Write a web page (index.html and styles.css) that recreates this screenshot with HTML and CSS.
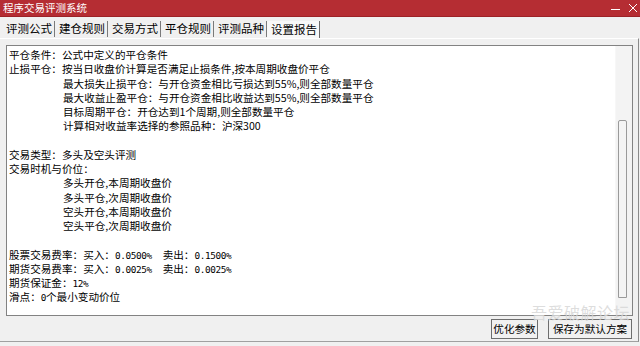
FILE: index.html
```html
<!DOCTYPE html>
<html lang="zh-CN">

<head>
  <meta charset="UTF-8" />
  <title>程序交易评测系统</title>
  <link rel="stylesheet" href="styles.css">
</head>

<body>
  <div class="window">
    <div class="titlebar">
      <span class="title">程序交易评测系统</span>
      <div class="controls">
        <svg width="10" height="10" viewBox="0 0 10 10"><path d="M0 6.5h9" stroke="#fff" stroke-width="1" /></svg>
        <svg width="10" height="10" viewBox="0 0 10 10"><path d="M1 1l8 8M9 1l-8 8" stroke="#fff" stroke-width="1" /></svg>
      </div>
    </div>

    <div class="tabs">
      <div class="tab">评测公式</div>
      <div class="tab">建仓规则</div>
      <div class="tab">交易方式</div>
      <div class="tab">平仓规则</div>
      <div class="tab">评测品种</div>
      <div class="tab active">设置报告</div>
    </div>

    <div class="panel">
      <div class="report">
        <div class="report-text">
          <div class="line">平仓条件：公式中定义的平仓条件</div>
          <div class="line">止损平仓：按当日收盘价计算是否满足止损条件,按本周期收盘价平仓</div>
          <div class="line indent">最大损失止损平仓：与开仓资金相比亏损达到55%,则全部数量平仓</div>
          <div class="line indent">最大收益止盈平仓：与开仓资金相比收益达到55%,则全部数量平仓</div>
          <div class="line indent">目标周期平仓：开仓达到1个周期,则全部数量平仓</div>
          <div class="line indent">计算相对收益率选择的参照品种：沪深300</div>
          <div class="line"></div>
          <div class="line">交易类型：多头及空头评测</div>
          <div class="line">交易时机与价位：</div>
          <div class="line indent">多头开仓,本周期收盘价</div>
          <div class="line indent">多头平仓,次周期收盘价</div>
          <div class="line indent">空头开仓,本周期收盘价</div>
          <div class="line indent">空头平仓,次周期收盘价</div>
          <div class="line"></div>
          <div class="line">股票交易费率：买入：<span class="num">0.0500%</span><span class="gap">卖出：</span><span class="num">0.1500%</span></div>
          <div class="line">期货交易费率：买入：<span class="num">0.0025%</span><span class="gap">卖出：</span><span class="num">0.0025%</span></div>
          <div class="line">期货保证金：<span class="num">12%</span></div>
          <div class="line">滑点：<span class="num">0</span>个最小变动价位</div>
        </div>
        <div class="scrollbar">
          <div class="thumb"></div>
        </div>
      </div>

      <div class="actions">
        <button class="btn btn-short">优化参数</button>
        <button class="btn btn-long">保存为默认方案</button>
      </div>

      <div class="watermark">吾爱破解论坛</div>
    </div>
  </div>
</body>

</html>
```

FILE: styles.css
```css
body {
  margin: 0;
  padding: 0;
  background-color: #f0f0f0;
  font-family: "Noto Sans CJK SC", "Liberation Sans", sans-serif;
  color: #000;
}

.window {
  width: 640px;
  height: 346px;
  display: flex;
  flex-direction: column;
  overflow: hidden;
}

.titlebar {
  height: 16px;
  background-color: #b52d33;
  border-bottom: 1px solid #9c2227;
  display: flex;
  align-items: center;
  justify-content: space-between;
  padding: 0 2px 0 3px;
}

.title {
  color: #fff;
  font-size: 10.5px;
  line-height: 16px;
}

.controls {
  display: flex;
  gap: 7px;
  align-items: center;
}

.tabs {
  height: 21px;
  display: flex;
  align-items: flex-end;
  padding-left: 2px;
}

.tab {
  font-size: 11.5px;
  line-height: 14px;
  padding: 0 2px 2px 4px;
  margin-bottom: 1px;
  border-right: 1px solid #7a7a7a;
}

.tab.active {
  background-color: #f8f8f8;
  height: 17px;
  line-height: 16px;
  padding-bottom: 0;
  margin-bottom: 0;
  border-right-color: #6a6a6a;
}

.panel {
  position: relative;
  flex: 1;
  border-top: 1px solid #fff;
  border-right: 1px solid #8a8a8a;
  border-bottom: 1px solid #a0a0a0;
  margin-right: 1px;
  margin-bottom: 4px;
  padding: 6px 5px 0 6px;
  display: flex;
  flex-direction: column;
}

.report {
  width: 625px;
  height: 269px;
  border: 1px solid #828282;
  display: flex;
  background-color: #fff;
}

.report-text {
  flex: 1;
  padding: 2px 0 0 2px;
  font-size: 10.6px;
  line-height: 14.25px;
}

.line {
  height: 14.25px;
  white-space: pre;
}

.indent {
  padding-left: 54px;
}

.num {
  font-family: "DejaVu Sans Mono", monospace;
  font-size: 9.4px;
  letter-spacing: -0.4px;
}

.gap {
  margin-left: 11px;
}

.scrollbar {
  width: 17px;
  background-color: #f3f3f3;
  border-left: 1px solid #f7f7f7;
  box-sizing: border-box;
}

.thumb {
  width: 9px;
  height: 178px;
  margin: 74px 0 0 2px;
  box-sizing: border-box;
  border: 1px solid #9a9a9a;
  border-radius: 2px 2px 0 0;
  background-color: #f4f4f4;
}

.actions {
  display: flex;
  justify-content: flex-end;
  gap: 10px;
  margin-top: 3px;
  padding-right: 1px;
}

.btn {
  height: 20px;
  padding: 0;
  font-family: "Noto Sans CJK SC", sans-serif;
  font-size: 10.6px;
  line-height: 18px;
  background-color: #f1f1f1;
  border: 1px solid #6e6e6e;
  border-radius: 0;
  color: #000;
}

.btn-short {
  width: 47px;
}

.btn-long {
  width: 84px;
}

.watermark {
  position: absolute;
  right: 8px;
  bottom: 20px;
  font-size: 16px;
  line-height: 18px;
  color: rgba(215, 215, 215, 0.85);
  letter-spacing: 0.5px;
  pointer-events: none;
}
```
